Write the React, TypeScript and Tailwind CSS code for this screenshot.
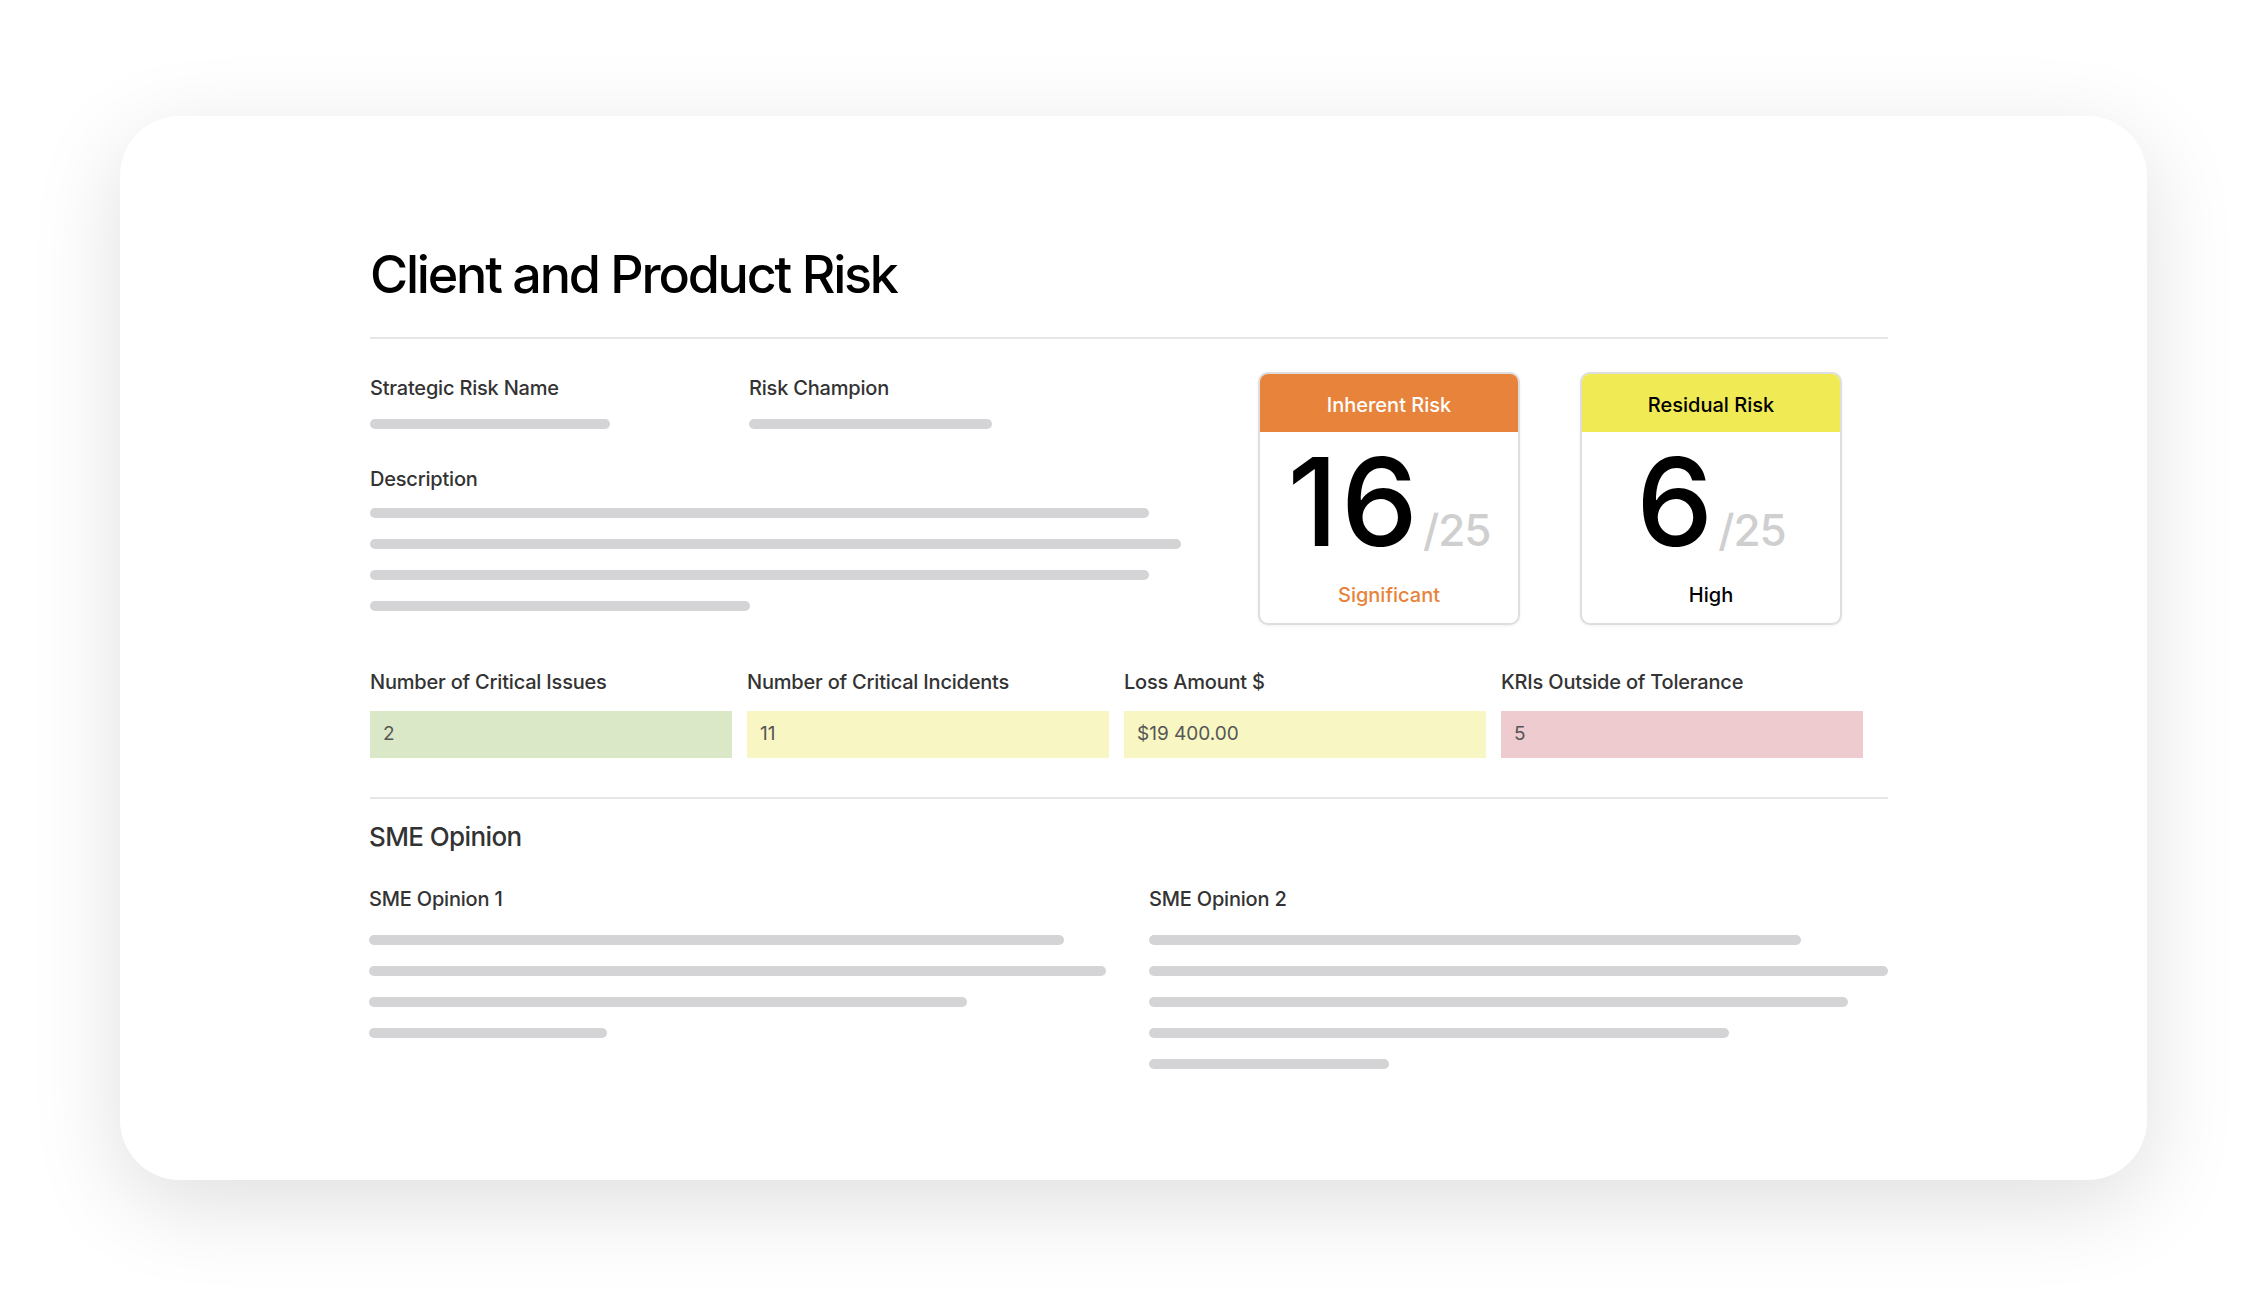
import React from 'react'

const font = { fontFamily: 'Inter, "Noto Sans", sans-serif' }

function Bar({ w }: { w: string }) {
  return <div className={`h-[10px] rounded-full bg-[#d4d4d6] ${w}`} />
}

function Label({ children }: { children: React.ReactNode }) {
  return <div className="text-[20px] leading-[24px] font-medium text-[#333] tracking-[-0.2px]">{children}</div>
}

interface RiskCardProps {
  title: string
  score: string
  rating: string
  headerClass: string
  titleClass: string
  ratingClass: string
}

function RiskCard({ title, score, rating, headerClass, titleClass, ratingClass }: RiskCardProps) {
  return (
    <div className="w-[262px] h-[253px] rounded-[10px] border-2 border-[#dedede] bg-white overflow-hidden flex flex-col shadow-[0_1px_3px_rgba(0,0,0,0.06)]">
      <div className={`h-[58px] pt-[3px] flex items-center justify-center text-[20px] font-medium ${headerClass} ${titleClass}`}>
        {title}
      </div>
      <div className="flex-1 flex flex-col items-center">
        <div className="flex items-baseline mt-[10px] h-[120px]">
          <span className="text-[122px] leading-[120px] font-medium text-black tracking-[3px]">{score}</span>
          <span className="text-[44px] leading-[44px] font-medium text-[#cfcfcf] ml-[2px] tracking-[-1px]">/25</span>
        </div>
        <div className={`mt-[21px] text-[20px] leading-[24px] font-medium ${ratingClass}`}>{rating}</div>
      </div>
    </div>
  )
}

const metrics = [
  { label: 'Number of Critical Issues', value: '2', bg: 'bg-[#dae8c7]' },
  { label: 'Number of Critical Incidents', value: '11', bg: 'bg-[#f8f6c3]' },
  { label: 'Loss Amount $', value: '$19 400.00', bg: 'bg-[#f8f6c3]' },
  { label: 'KRIs Outside of Tolerance', value: '5', bg: 'bg-[#eecbce]' }
]

export default function App() {
  return (
    <div className="min-h-screen bg-white pt-[116px] pl-[120px]" style={font}>
      <div className="w-[2027px] h-[1064px] rounded-[60px] bg-white shadow-[0_24px_90px_rgba(0,0,0,0.13)] pl-[250px] pr-[259px] pt-[127px]">
        {/* Title */}
        <h1 className="text-[52px] leading-[64px] font-medium text-black tracking-[-2.2px]">
          Client and Product Risk
        </h1>
        <div className="mt-[30px] h-[2px] bg-[#e6e6e6]" />

        {/* Top row */}
        <div className="flex items-start">
          <div className="w-[888px] mt-[37px]">
            <div className="flex">
              <div className="w-[379px]">
                <Label>Strategic Risk Name</Label>
                <div className="mt-[19px]"><Bar w="w-[240px]" /></div>
              </div>
              <div>
                <Label>Risk Champion</Label>
                <div className="mt-[19px]"><Bar w="w-[243px]" /></div>
              </div>
            </div>
            <div className="mt-[38px]">
              <Label>Description</Label>
              <div className="mt-[17px] flex flex-col gap-[21px]">
                <Bar w="w-[779px]" />
                <Bar w="w-[811px]" />
                <Bar w="w-[779px]" />
                <Bar w="w-[380px]" />
              </div>
            </div>
          </div>
          <div className="mt-[33px] flex gap-[60px]">
            <RiskCard
              title="Inherent Risk"
              score="16"
              rating="Significant"
              headerClass="bg-[#e7833b]"
              titleClass="text-white"
              ratingClass="text-[#e7833b]"
            />
            <RiskCard
              title="Residual Risk"
              score="6"
              rating="High"
              headerClass="bg-[#f0ea55]"
              titleClass="text-black"
              ratingClass="text-black"
            />
          </div>
        </div>

        {/* Metrics */}
        <div className="mt-[45px] flex gap-[15px]">
          {metrics.map((m) => (
            <div key={m.label} className="w-[362px]">
              <Label>{m.label}</Label>
              <div className={`mt-[17px] h-[47px] flex items-center pl-[13px] text-[19px] text-[#555] ${m.bg}`}>
                {m.value}
              </div>
            </div>
          ))}
        </div>

        <div className="mt-[39px] h-[2px] bg-[#e6e6e6]" />

        {/* SME Opinion */}
        <div className="mt-[22px] -ml-px text-[26px] leading-[32px] font-medium text-[#333] tracking-[-0.6px]">SME Opinion</div>
        <div className="mt-[34px] -ml-px flex">
          <div className="w-[780px]">
            <Label>SME Opinion 1</Label>
            <div className="mt-[24px] flex flex-col gap-[21px]">
              <Bar w="w-[695px]" />
              <Bar w="w-[737px]" />
              <Bar w="w-[598px]" />
              <Bar w="w-[238px]" />
            </div>
          </div>
          <div>
            <Label>SME Opinion 2</Label>
            <div className="mt-[24px] flex flex-col gap-[21px]">
              <Bar w="w-[652px]" />
              <Bar w="w-[739px]" />
              <Bar w="w-[699px]" />
              <Bar w="w-[580px]" />
              <Bar w="w-[240px]" />
            </div>
          </div>
        </div>
      </div>
    </div>
  )
}
